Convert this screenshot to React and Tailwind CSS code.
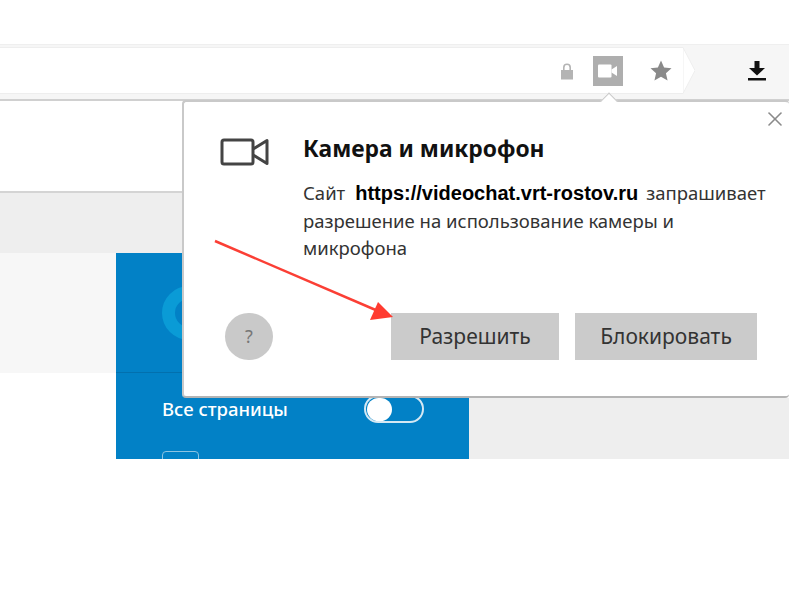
import { X } from "lucide-react";

const sans = { fontFamily: '"Noto Sans", "Open Sans", sans-serif' };

const CameraOutline = () => (
  <svg width="50" height="30" viewBox="0 0 50 30" fill="none" stroke="#444" strokeWidth="3" strokeLinejoin="round">
    <rect x="2" y="3" width="31" height="24" rx="2" />
    <path d="M33 12 L47 3.5 V26.5 L33 18" />
  </svg>
);

const Arrow = () => (
  <svg className="absolute left-[210px] top-[236px]" width="190" height="90" viewBox="210 236 190 90">
    <line x1="215" y1="241" x2="378" y2="311" stroke="#fb3f35" strokeWidth="2.5" />
    <polygon points="393,317 378,302 370,320" fill="#ff3b30" />
  </svg>
);

const Toolbar = () => (
  <div className="flex h-[57px] w-[789px] border-t border-b-2 border-t-[#efefef] border-b-[#d0d0d0] bg-[#f6f6f6]">
    <div className="mt-[2px] mb-[5px] flex flex-1 items-center justify-end border-y border-[#eeeeee] bg-white pr-[11px]">
      <svg width="14" height="18" viewBox="0 0 14 18" fill="#b4b4b4" className="mr-[19px]">
        <path d="M3 8V5.5a4 4 0 0 1 8 0V8h-1.6V5.5a2.4 2.4 0 0 0-4.8 0V8z" />
        <rect x="1" y="8" width="12" height="9.5" />
      </svg>
      <div className="mr-[27px] flex h-[30px] w-[30px] items-center justify-center bg-[#aeaeae]">
        <svg width="20" height="14" viewBox="0 0 20 14" fill="#fff">
          <rect x="0" y="0.5" width="13.5" height="13" rx="1" />
          <path d="M13.5 5.5 L19 2 V12 L13.5 8.5z" />
        </svg>
      </div>
      <svg width="22" height="21" viewBox="0 0 24 23" fill="#8a8a8a">
        <path d="M12 0.5l3.4 7.6 8.1.8-6.1 5.5 1.8 8.1L12 18.3l-7.2 4.2 1.8-8.1L.5 8.9l8.1-.8z" />
      </svg>
    </div>
    <svg width="12" height="47" viewBox="0 0 12 47" className="mt-[2px]" preserveAspectRatio="none">
      <path d="M0 0.5 L12 23.5 L0 46.5 Z" fill="#fff" stroke="#eeeeee" />
    </svg>
    <div className="flex w-[94px] items-center justify-center pb-[3px] pl-[30px]">
      <svg width="18" height="20" viewBox="0 0 18 20" fill="#111">
        <path d="M6.5 0h5v7H17l-8 7.5L1 7h5.5z" />
        <rect x="0" y="17" width="18" height="2.5" />
      </svg>
    </div>
  </div>
);

const Popup = () => (
  <div className="absolute left-[182px] top-[100px] h-[298px] w-[607px] rounded-sm border-2 border-r-0 border-[#c9c9c9] border-b-[#b4b4b4] bg-white" style={sans}>
    <div className="absolute left-[419px] top-[-7px] h-[12px] w-[12px] rotate-45 border-l border-t border-[#c9c9c9] bg-white" />
    <X className="absolute right-[2px] top-[5px] text-[#8a8a8a]" size={24} strokeWidth={1.6} />
    <div className="flex pl-[36px] pt-[35px]">
      <div className="w-[83px]">
        <CameraOutline />
      </div>
      <div>
        <h2 className="text-[22.8px] leading-[24px] font-bold text-[#111]">Камера и микрофон</h2>
        <div className="mt-[18px] text-[18.5px] leading-[27px] text-[#333]">
          <div className="flex items-baseline">
            <span>Сайт</span>
            <span className="ml-[10px] mr-[8px] text-[20px] font-bold text-black" style={{ fontFamily: '"Liberation Sans", sans-serif' }}>
              https://videochat.vrt-rostov.ru
            </span>
            <span>запрашивает</span>
          </div>
          <div>разрешение на использование камеры и</div>
          <div>микрофона</div>
        </div>
      </div>
    </div>
    <div className="mt-[52px] flex pl-[41px]">
      <div className="flex h-[47px] w-[48px] items-center justify-center rounded-full bg-[#c9c9c9] text-[18px] text-[#777]">?</div>
      <button className="ml-[118px] h-[47px] w-[168px] bg-[#cbcbcb] text-[21px] text-[#333]">Разрешить</button>
      <button className="ml-[16px] h-[47px] w-[182px] bg-[#cbcbcb] text-[21px] text-[#333]">Блокировать</button>
    </div>
  </div>
);

const Sidebar = () => (
  <div className="h-[206px] w-[353px] overflow-hidden bg-[#0281c6] text-white" style={sans}>
    <div className="flex h-[120px] items-center border-b border-[#0270ae] pl-[46px]">
      <div className="h-[54px] w-[54px] rounded-full border-[13px] border-[#0a9bd6]" />
    </div>
    <div className="flex h-[51px] items-center justify-between pl-[46px] pr-[45px] pt-[21px]">
      <span className="text-[18.5px] font-medium">Все страницы</span>
      <div className="flex h-[28px] w-[60px] items-center rounded-full border-2 border-[#d5e8f3] pl-[1px]">
        <div className="h-[23px] w-[25px] rounded-full bg-white" />
      </div>
    </div>
    <div className="ml-[46px] mt-[27px] h-[24px] w-[37px] rounded border border-[#8cc3e2]" />
  </div>
);

export default function App() {
  return (
    <div className="relative h-[600px] w-[800px] overflow-hidden bg-white pt-[44px]">
      <Toolbar />
      <div className="h-[92px] w-[789px] border-b-2 border-[#d4d4d4] bg-white" />
      <div className="h-[60px] w-[789px] bg-[#eeeeee]" />
      <div className="flex w-[789px]">
        <div className="w-[116px]">
          <div className="h-[120px] bg-[#f7f7f7]" />
        </div>
        <Sidebar />
        <div className="flex-1 pt-[145px]">
          <div className="h-[61px] bg-[#eeeeee]" />
        </div>
      </div>
      <Popup />
      <Arrow />
    </div>
  );
}
